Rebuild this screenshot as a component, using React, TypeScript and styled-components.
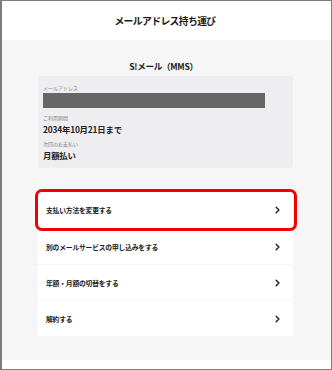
import React from "react";
import styled, { createGlobalStyle } from "styled-components";

const GlobalStyle = createGlobalStyle`
  html, body {
    margin: 0;
    padding: 0;
    background: #ffffff;
  }
  body {
    font-family: "Noto Sans CJK JP", "Noto Sans", sans-serif;
    color: #222222;
  }
`;

const menu = [
  { label: "支払い方法を変更する", active: true },
  { label: "別のメールサービスの申し込みをする" },
  { label: "年額・月額の切替をする" },
  { label: "解約する" },
];

const Chevron: React.FC = () => (
  <svg width="5" height="8" viewBox="0 0 5 8">
    <polyline
      points="1.2,1.3 3.9,4 1.2,6.7"
      fill="none"
      stroke="#222"
      strokeWidth="1.5"
      strokeLinecap="round"
      strokeLinejoin="round"
    />
  </svg>
);

const App: React.FC = () => {
  return (
    <Frame>
      <GlobalStyle />
      <Header>
        <h1>メールアドレス持ち運び</h1>
      </Header>
      <Main>
        <ServiceName>S!メール（MMS）</ServiceName>
        <InfoBox>
          <Label>メールアドレス</Label>
          <Masked />
          <Label>ご利用期間</Label>
          <Value>2034年10月21日まで</Value>
          <Label>次回のお支払い</Label>
          <Value>月額払い</Value>
        </InfoBox>
        <Menu>
          {menu.map((m) => (
            <Item key={m.label} $active={m.active}>
              <span>{m.label}</span>
              <Chevron />
            </Item>
          ))}
        </Menu>
      </Main>
      <Footer />
    </Frame>
  );
};

export default App;

const Frame = styled.div`
  width: 332px;
  height: 370px;
  box-sizing: border-box;
  border: 1px solid #7c7c7c;
  border-left-width: 2px;
  display: flex;
  flex-direction: column;
  overflow: hidden;
`;

const Header = styled.div`
  flex-shrink: 0;
  height: 39px;
  background: #ffffff;
  display: flex;
  align-items: center;
  justify-content: center;
  padding-right: 3px;

  h1 {
    margin: 0;
    font-size: 9.8px;
    font-weight: 700;
    letter-spacing: -0.6px;
    color: #1a1a1a;
  }
`;

const Main = styled.div`
  flex: 1;
  min-height: 0;
  background: #f6f6f6;
  padding: 19px 38px 0 36px;
  display: flex;
  flex-direction: column;
`;

const ServiceName = styled.div`
  text-align: center;
  font-size: 8.6px;
  font-weight: 700;
  line-height: 14px;
  color: #1a1a1a;
  padding-right: 4px;
  letter-spacing: -0.3px;
`;

const InfoBox = styled.div`
  margin-top: 3px;
  height: 92px;
  box-sizing: border-box;
  background: #eeeef0;
  border-radius: 3px;
  padding: 7px 5px 0 5px;
  display: flex;
  flex-direction: column;
`;

const Label = styled.div`
  font-size: 5px;
  line-height: 7px;
  color: #858585;
  margin-top: 1px;
`;

const Masked = styled.div`
  height: 15px;
  width: 222px;
  background: #666666;
  margin: 2px 0 5px;
`;

const Value = styled.div`
  font-size: 8.4px;
  font-weight: 700;
  line-height: 12px;
  color: #222222;
  margin: 2px 0 4px;
  letter-spacing: -0.2px;
`;

const Menu = styled.div`
  margin-top: 24px;
  background: #ffffff;
  display: flex;
  flex-direction: column;
`;

const Item = styled.div<{ $active?: boolean }>`
  position: relative;
  box-sizing: border-box;
  height: 36px;
  display: flex;
  align-items: center;
  justify-content: space-between;
  padding: 0 13px 0 8px;
  font-size: 6.8px;
  font-weight: 700;
  color: #1a1a1a;
  letter-spacing: -0.2px;

  & + & {
    border-top: 1px solid #f5f5f5;
  }

  &::after {
    content: "";
    display: ${(p) => (p.$active ? "block" : "none")};
    position: absolute;
    top: -3px;
    bottom: -3px;
    left: -3px;
    right: -4px;
    border: 3px solid #f00000;
    border-radius: 7px;
    z-index: 1;
  }
`;

const Footer = styled.div`
  flex-shrink: 0;
  height: 9px;
  background: #ffffff;
`;
